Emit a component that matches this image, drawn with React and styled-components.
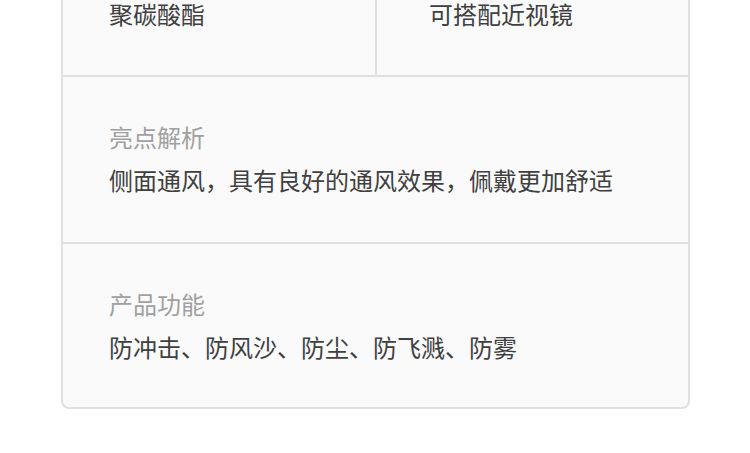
import React from "react";
import styled, { createGlobalStyle } from "styled-components";

const topRow = [
  { value: "聚碳酸酯", wide: true },
  { value: "可搭配近视镜", wide: false },
];

const sections = [
  { label: "亮点解析", value: "侧面通风，具有良好的通风效果，佩戴更加舒适" },
  { label: "产品功能", value: "防冲击、防风沙、防尘、防飞溅、防雾" },
];

const App = () => {
  return (
    <>
      <GlobalStyle />
      <Card>
        <TopRow>
          {topRow.map((cell) => (
            <TopCell key={cell.value} $first={cell.wide}>
              <TopValue>{cell.value}</TopValue>
            </TopCell>
          ))}
        </TopRow>
        {sections.map((s, i) => (
          <Section key={s.label} $last={i === sections.length - 1}>
            <Label>{s.label}</Label>
            <Value>{s.value}</Value>
          </Section>
        ))}
      </Card>
    </>
  );
};

export default App;

const GlobalStyle = createGlobalStyle`
  html, body {
    margin: 0;
    padding: 0;
    background: #ffffff;
    overflow: hidden;
  }
  body {
    font-family: "Noto Sans CJK SC", "Noto Sans", sans-serif;
  }
`;

const Card = styled.div`
  width: 629px;
  box-sizing: border-box;
  margin: -40px 0 0 61px;
  background: #fafafa;
  border: 2px solid #e0e0e0;
  border-radius: 8px;
`;

const TopRow = styled.div`
  display: grid;
  grid-template-columns: 314px 1fr;
  border-bottom: 2px solid #e0e0e0;
`;

const TopCell = styled.div`
  box-sizing: border-box;
  padding: 38px 0 47px ${(p) => (p.$first ? "46px" : "52px")};
  border-right: ${(p) => (p.$first ? "2px solid #e0e0e0" : "none")};
`;

const Section = styled.div`
  display: flex;
  flex-direction: column;
  gap: 9px;
  padding: 43px 0 ${(p) => (p.$last ? "43px" : "45px")} 46px;
  border-bottom: ${(p) => (p.$last ? "none" : "2px solid #e0e0e0")};
`;

const Label = styled.div`
  font-size: 24px;
  line-height: 34px;
  color: #a0a0a0;
`;

const Value = styled.div`
  font-size: 24px;
  line-height: 34px;
  color: #404040;
`;

const TopValue = styled(Value)`
  line-height: 28px;
`;
